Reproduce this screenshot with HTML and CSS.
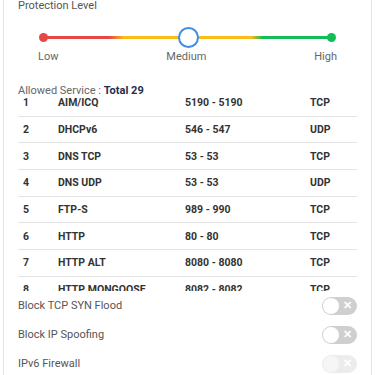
FILE: index.html
```html
<!DOCTYPE html>
<html lang="en">
<head>
  <meta charset="UTF-8">
  <title>Firewall</title>
  <link rel="stylesheet" href="styles.css">
</head>
<body>
  <div class="card">
    <div class="section-title">Protection Level</div>

    <div class="level">
      <div class="track">
        <span class="dot dot-low"></span>
        <span class="knob"></span>
        <span class="dot dot-high"></span>
      </div>
      <div class="level-labels">
        <span>Low</span>
        <span>Medium</span>
        <span>High</span>
      </div>
    </div>

    <div class="allowed">Allowed Service : <b>Total 29</b></div>

    <div class="service-list">
      <table class="services">
        <tr><td>1</td><td>AIM/ICQ</td><td>5190 - 5190</td><td>TCP</td></tr>
        <tr><td>2</td><td>DHCPv6</td><td>546 - 547</td><td>UDP</td></tr>
        <tr><td>3</td><td>DNS TCP</td><td>53 - 53</td><td>TCP</td></tr>
        <tr><td>4</td><td>DNS UDP</td><td>53 - 53</td><td>UDP</td></tr>
        <tr><td>5</td><td>FTP-S</td><td>989 - 990</td><td>TCP</td></tr>
        <tr><td>6</td><td>HTTP</td><td>80 - 80</td><td>TCP</td></tr>
        <tr><td>7</td><td>HTTP ALT</td><td>8080 - 8080</td><td>TCP</td></tr>
        <tr><td>8</td><td>HTTP MONGOOSE</td><td>8082 - 8082</td><td>TCP</td></tr>
        <tr><td>9</td><td>HTTPS</td><td>443 - 443</td><td>TCP</td></tr>
      </table>
    </div>

    <div class="option">
      <span>Block TCP SYN Flood</span>
      <span class="switch"><span class="switch-knob"></span><span class="switch-x">&#x2715;</span></span>
    </div>
    <div class="option">
      <span>Block IP Spoofing</span>
      <span class="switch"><span class="switch-knob"></span><span class="switch-x">&#x2715;</span></span>
    </div>
    <div class="option">
      <span>IPv6 Firewall</span>
      <span class="switch disabled"><span class="switch-knob"></span><span class="switch-x">&#x2715;</span></span>
    </div>
  </div>
</body>
</html>
```

FILE: styles.css
```css
body {
  margin: 0;
  font-family: Roboto, "Liberation Sans", sans-serif;
  background: #ffffff;
  color: #555;
  overflow: hidden;
}

.card {
  margin-left: 3px;
  width: 339px;
  padding: 0 14px;
  border-left: 1px solid #e4e4e4;
  border-right: 1px solid #e4e4e4;
  height: 375px;
}

.section-title {
  font-size: 11px;
  line-height: 12px;
  color: #555;
}

.level {
  padding-top: 24px;
}

.track {
  position: relative;
  margin: 0 25px;
  height: 3px;
  border-radius: 2px;
  background: linear-gradient(to right, #e74845 0%, #e74845 23%, #fbbb1c 28%, #fbbb1c 72%, #12bd57 76%, #12bd57 100%);
}

.dot {
  position: absolute;
  top: -3px;
  width: 9px;
  height: 9px;
  border-radius: 50%;
}

.dot-low {
  left: -4px;
  background: #e74845;
}

.dot-high {
  right: -4px;
  background: #12bd57;
}

.knob {
  position: absolute;
  left: 50%;
  top: -9px;
  margin-left: -10px;
  width: 17px;
  height: 17px;
  border: 2px solid #3b8de9;
  border-radius: 50%;
  background: #fff;
}

.level-labels {
  display: flex;
  justify-content: space-between;
  padding: 11px 20px 0;
  font-size: 11px;
  line-height: 13px;
  color: #666;
}

.allowed {
  margin-top: 21px;
  font-size: 11px;
  line-height: 13px;
  color: #666;
}

.allowed b {
  color: #1f2d4b;
}

.service-list {
  height: 194px;
  overflow: hidden;
}

.services {
  width: 100%;
  margin-top: -7px;
  border-collapse: collapse;
  font-size: 10.5px;
  font-weight: bold;
  color: #333;
}

.services td {
  height: 25.67px;
  padding: 0;
  border-bottom: 1px solid #e3e3e3;
}

.services td:nth-child(1) {
  width: 35px;
  padding-left: 5px;
}

.services td:nth-child(2) {
  width: 127px;
}

.services td:nth-child(3) {
  width: 125px;
}

.option {
  display: flex;
  justify-content: space-between;
  align-items: center;
  height: 29px;
  font-size: 11px;
  color: #555;
}

.switch {
  position: relative;
  width: 35px;
  height: 18px;
  border-radius: 9px;
  background: #cfcfcf;
}

.switch-knob {
  position: absolute;
  left: 1px;
  top: 1px;
  width: 16px;
  height: 16px;
  border-radius: 50%;
  background: #fff;
}

.switch-x {
  position: absolute;
  right: 5px;
  top: 2px;
  font-size: 11px;
  line-height: 14px;
  color: #fff;
  font-weight: bold;
}

.switch.disabled {
  background: #ececec;
}

.switch.disabled .switch-knob {
  background: #f6f6f6;
}
```
